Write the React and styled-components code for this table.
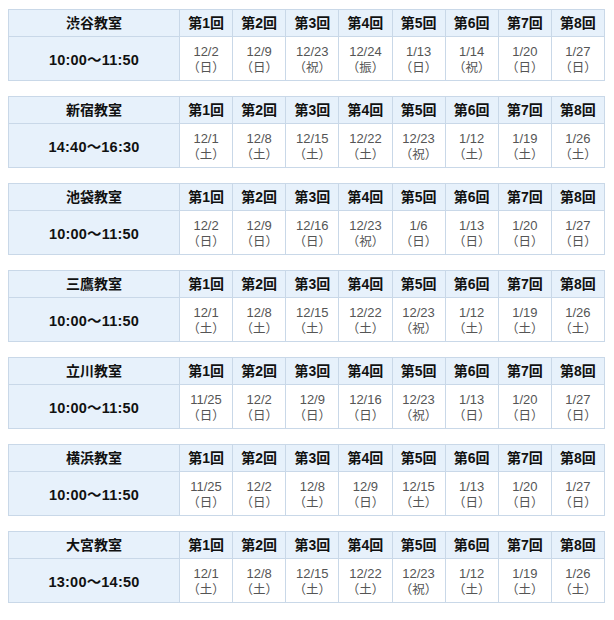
import React from 'react';
import styled, { createGlobalStyle } from 'styled-components';

const GlobalStyle = createGlobalStyle`
  html, body {
    margin: 0;
    padding: 0;
    background: #ffffff;
  }
  body {
    font-family: "Liberation Sans", "Noto Sans CJK JP", sans-serif;
  }
`;

const Page = styled.div`
  display: flex;
  flex-direction: column;
  gap: 15px;
  padding: 9px 0 0 8px;
  width: 597px;
`;

const Table = styled.table`
  width: 597px;
  border-collapse: collapse;
  table-layout: fixed;
  border: 1px solid #c9d8e8;
`;

const HeadCell = styled.th`
  height: 26px;
  padding: 0;
  background: #e7f1fb;
  border: 1px solid #c9d8e8;
  color: #111;
  font-family: "Liberation Sans", "Noto Sans CJK JP", sans-serif;
  font-size: 14px;
  line-height: 16px;
  font-weight: bold;
  text-align: center;
  vertical-align: middle;
`;

const TimeCell = styled.td`
  height: 43px;
  padding: 0;
  background: #e7f1fb;
  border: 1px solid #c9d8e8;
  color: #111;
  font-size: 14.5px;
  font-weight: bold;
  text-align: center;
  vertical-align: middle;
  letter-spacing: 0.2px;
`;

const DateCell = styled.td`
  padding: 0;
  background: #ffffff;
  border: 1px solid #c9d8e8;
  color: #555;
  text-align: center;
  vertical-align: middle;
`;

const DateText = styled.span`
  display: block;
  font-size: 13px;
  line-height: 15px;
`;

const Day = styled.span`
  display: block;
  font-family: "Noto Sans CJK JP", sans-serif;
  font-size: 12.5px;
  line-height: 15px;
`;

const schedules = [
  { name: '渋谷教室', time: '10:00～11:50', dates: [['12/2', '日'], ['12/9', '日'], ['12/23', '祝'], ['12/24', '振'], ['1/13', '日'], ['1/14', '祝'], ['1/20', '日'], ['1/27', '日']] },
  { name: '新宿教室', time: '14:40～16:30', dates: [['12/1', '土'], ['12/8', '土'], ['12/15', '土'], ['12/22', '土'], ['12/23', '祝'], ['1/12', '土'], ['1/19', '土'], ['1/26', '土']] },
  { name: '池袋教室', time: '10:00～11:50', dates: [['12/2', '日'], ['12/9', '日'], ['12/16', '日'], ['12/23', '祝'], ['1/6', '日'], ['1/13', '日'], ['1/20', '日'], ['1/27', '日']] },
  { name: '三鷹教室', time: '10:00～11:50', dates: [['12/1', '土'], ['12/8', '土'], ['12/15', '土'], ['12/22', '土'], ['12/23', '祝'], ['1/12', '土'], ['1/19', '土'], ['1/26', '土']] },
  { name: '立川教室', time: '10:00～11:50', dates: [['11/25', '日'], ['12/2', '日'], ['12/9', '日'], ['12/16', '日'], ['12/23', '祝'], ['1/13', '日'], ['1/20', '日'], ['1/27', '日']] },
  { name: '横浜教室', time: '10:00～11:50', dates: [['11/25', '日'], ['12/2', '日'], ['12/8', '土'], ['12/9', '日'], ['12/15', '土'], ['1/13', '日'], ['1/20', '日'], ['1/27', '日']] },
  { name: '大宮教室', time: '13:00～14:50', dates: [['12/1', '土'], ['12/8', '土'], ['12/15', '土'], ['12/22', '土'], ['12/23', '祝'], ['1/12', '土'], ['1/19', '土'], ['1/26', '土']] },
];

function Schedule({ item }) {
  return (
    <Table>
      <colgroup>
        <col style={{ width: '171px' }} />
        {item.dates.map((_, i) => <col key={i} />)}
      </colgroup>
      <thead>
        <tr>
          <HeadCell>{item.name}</HeadCell>
          {item.dates.map((_, i) => (
            <HeadCell key={i}>第{i + 1}回</HeadCell>
          ))}
        </tr>
      </thead>
      <tbody>
        <tr>
          <TimeCell>{item.time}</TimeCell>
          {item.dates.map(([d, w], i) => (
            <DateCell key={i}>
              <DateText>{d}</DateText>
              <Day>（{w}）</Day>
            </DateCell>
          ))}
        </tr>
      </tbody>
    </Table>
  );
}

export default function App() {
  return (
    <>
      <GlobalStyle />
      <Page>
        {schedules.map(s => <Schedule key={s.name} item={s} />)}
      </Page>
    </>
  );
}
